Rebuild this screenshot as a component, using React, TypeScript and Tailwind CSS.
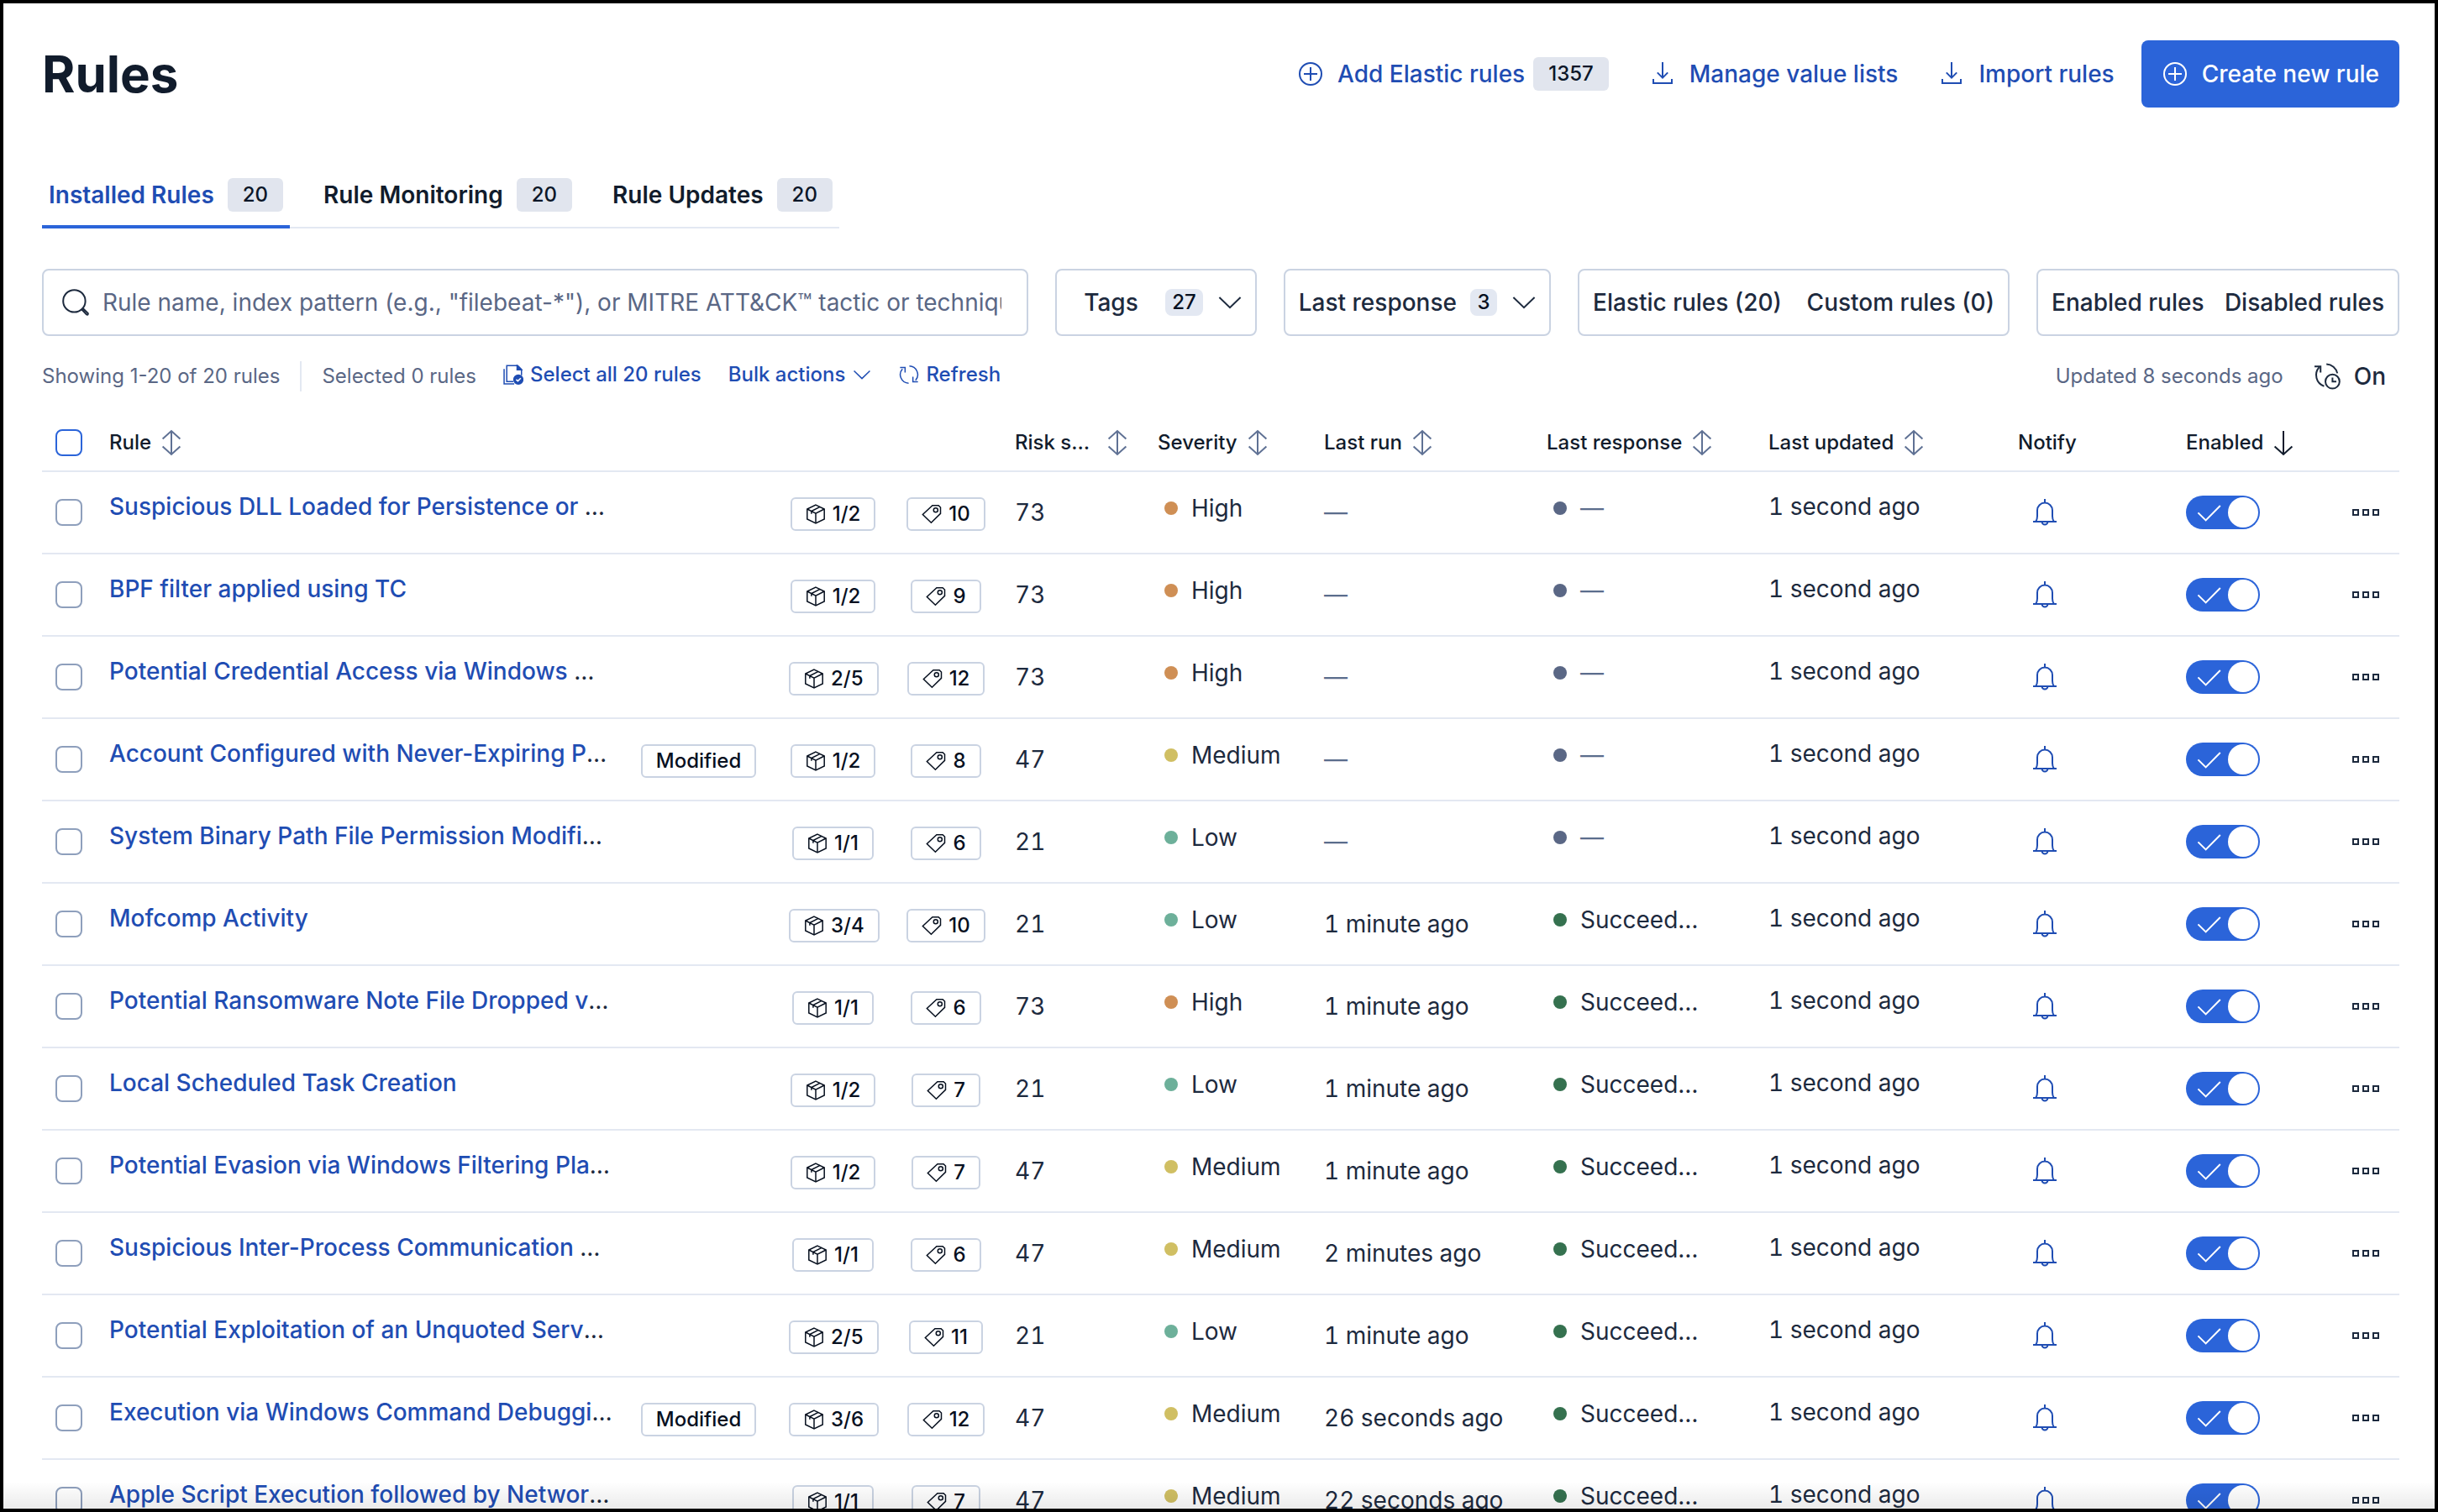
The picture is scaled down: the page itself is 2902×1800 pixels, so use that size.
import { ReactNode, useState } from 'react';

type Severity = 'High' | 'Medium' | 'Low';

interface Rule {
  name: string;
  truncated?: boolean;
  modified?: boolean;
  integrations: string;
  tags: number;
  risk: number;
  severity: Severity;
  lastRun?: string;
}

const RULES: Rule[] = [
  { name: 'Suspicious DLL Loaded for Persistence or ', truncated: true, integrations: '1/2', tags: 10, risk: 73, severity: 'High' },
  { name: 'BPF filter applied using TC', integrations: '1/2', tags: 9, risk: 73, severity: 'High' },
  { name: 'Potential Credential Access via Windows ', truncated: true, integrations: '2/5', tags: 12, risk: 73, severity: 'High' },
  { name: 'Account Configured with Never-Expiring P', truncated: true, modified: true, integrations: '1/2', tags: 8, risk: 47, severity: 'Medium' },
  { name: 'System Binary Path File Permission Modifi', truncated: true, integrations: '1/1', tags: 6, risk: 21, severity: 'Low' },
  { name: 'Mofcomp Activity', integrations: '3/4', tags: 10, risk: 21, severity: 'Low', lastRun: '1 minute ago' },
  { name: 'Potential Ransomware Note File Dropped v', truncated: true, integrations: '1/1', tags: 6, risk: 73, severity: 'High', lastRun: '1 minute ago' },
  { name: 'Local Scheduled Task Creation', integrations: '1/2', tags: 7, risk: 21, severity: 'Low', lastRun: '1 minute ago' },
  { name: 'Potential Evasion via Windows Filtering Pla', truncated: true, integrations: '1/2', tags: 7, risk: 47, severity: 'Medium', lastRun: '1 minute ago' },
  { name: 'Suspicious Inter-Process Communication ', truncated: true, integrations: '1/1', tags: 6, risk: 47, severity: 'Medium', lastRun: '2 minutes ago' },
  { name: 'Potential Exploitation of an Unquoted Serv', truncated: true, integrations: '2/5', tags: 11, risk: 21, severity: 'Low', lastRun: '1 minute ago' },
  { name: 'Execution via Windows Command Debuggi', truncated: true, modified: true, integrations: '3/6', tags: 12, risk: 47, severity: 'Medium', lastRun: '26 seconds ago' },
  { name: 'Apple Script Execution followed by Networ', truncated: true, integrations: '1/1', tags: 7, risk: 47, severity: 'Medium', lastRun: '22 seconds ago' },
];

const SEVERITY_DOT: Record<Severity, string> = {
  High: 'bg-[#cf8f55]',
  Medium: 'bg-[#d0bf63]',
  Low: 'bg-[#6db09a]',
};

const TABS = [
  { id: 'installed', label: 'Installed Rules', count: 20 },
  { id: 'monitoring', label: 'Rule Monitoring', count: 20 },
  { id: 'updates', label: 'Rule Updates', count: 20 },
];

function Icon({ size = 'size-8', children }: { size?: string; children: ReactNode }) {
  return (
    <svg
      viewBox="0 0 16 16"
      className={`${size} shrink-0`}
      fill="none"
      stroke="currentColor"
      strokeWidth="1"
      aria-hidden="true"
    >
      {children}
    </svg>
  );
}

const PlusInCircle = () => (
  <Icon>
    <circle cx="8" cy="8" r="6.5" />
    <path d="M8 4v8M4 8h8" />
  </Icon>
);

const ImportIcon = () => (
  <Icon>
    <path d="M8 1v9.2M4.9 7.2 8 10.3l3.1-3.1M2.5 11v2.5h11V11" />
  </Icon>
);

const SearchIcon = () => (
  <Icon>
    <circle cx="7.2" cy="7.2" r="6.6" />
    <path d="m11.7 12.3 2.8 2.9q.6.3.8-.1t0-.7l-2.9-2.8" />
  </Icon>
);

const ChevronDown = ({ size }: { size?: string }) => (
  <Icon size={size}>
    <path d="m1.7 5 6.3 6.1L14.3 5" />
  </Icon>
);

const SortIcon = () => (
  <Icon>
    <path d="M8 1v14M2.8 5.8 8 1l5.2 4.8M2.8 10.2 8 15l5.2-4.8" />
  </Icon>
);

const SortDown = () => (
  <Icon>
    <path d="M8 1v14M2.8 10.2 8 15l5.2-4.8" />
  </Icon>
);

const PagesSelect = () => (
  <Icon size="size-6">
    <path d="M.7 3.5v11.8h8" />
    <path d="M8 13.5H2.8V.8h8.7l3 3v4.7" />
    <path d="M11 .8v3.4h3.5z" fill="currentColor" />
    <circle cx="12" cy="11.9" r="3.6" fill="currentColor" />
    <path d="m10.3 11.9 1.3 1.2 2.3-2.3" stroke="#fff" />
  </Icon>
);

const RefreshIcon = () => (
  <Icon size="size-6">
    <path d="M8.3 1.2a6.8 6.8 0 0 1 4.9 11.3M7.7 14.8A6.8 6.8 0 0 1 2.8 3.5" />
    <path d="M.9 2.4h4v4M15.1 13.6h-4v-4" />
  </Icon>
);

const RefreshTime = () => (
  <Icon>
    <path d="M7.6.7a7 7 0 0 1 6.5 5.5M6.2 13.9A7 7 0 0 1 3.3 2.6" />
    <path d="M.5 2.1h3.6v3.6" />
    <circle cx="11.2" cy="11.1" r="4.2" />
    <path d="M11.2 8.8v2.3h2.3" />
  </Icon>
);

const PackageIcon = () => (
  <Icon size="size-6">
    <path d="M8 .7 14.8 4v8L8 15.3 1.2 12V4z" />
    <path d="M1.2 4 8 7.4 14.8 4M8 7.4v7.9M4.6 7.8V5.7l6.8-3.4" />
  </Icon>
);

const TagIcon = () => (
  <Icon size="size-6">
    <path d="M8.6 1.2h4.8l1.6 1.5v4.9l-7.4 7.2L.9 8.3z" />
    <circle cx="11.2" cy="4.8" r="1.7" />
  </Icon>
);

const BellIcon = () => (
  <Icon>
    <path d="M8 0v2.2M1 13.5h14M2.6 13.4c.6-.8.9-1.9.9-3.2V6.800a4.5 4.5 0 0 1 9 0v3.4c0 1.300.3 2.400.9 3.200M6.300 13.600a1.700 1.700 0 0 0 3.400 0" />
  </Icon>
);

const BoxesHorizontal = () => (
  <Icon>
    <path d="M.5 6.5h3v3h-3zM6.5 6.5h3v3h-3zM12.5 6.5h3v3h-3z" />
  </Icon>
);

function CountBadge({ children }: { children: ReactNode }) {
  return (
    <span className="flex h-10 items-center rounded-md bg-[#e1e5ee] px-[18px] text-[24px] font-medium text-[#0b1628]">
      {children}
    </span>
  );
}

function OutlineBadge({ children }: { children: ReactNode }) {
  return (
    <button
      type="button"
      className="mx-auto flex h-10 items-center gap-2 rounded-md border-2 border-[#cad3e2] px-4 text-[24px] font-medium text-[#07101f]"
    >
      {children}
    </button>
  );
}

function HeaderLink({ icon, label, badge }: { icon: ReactNode; label: string; badge?: number }) {
  return (
    <a href="#" className="flex h-20 items-center px-4 font-medium text-[#1f4db3]">
      {icon}
      <span className="ml-4">{label}</span>
      {badge !== undefined && (
        <span className="ml-[10px]">
          <CountBadge>{badge}</CountBadge>
        </span>
      )}
    </a>
  );
}

function FilterButton({ label, count, className }: { label: string; count: number; className: string }) {
  return (
    <button
      type="button"
      className={`flex h-20 items-center justify-end gap-4 rounded-lg border-2 border-[#cad3e2] pr-[14px] pl-4 font-medium ${className}`}
    >
      <span className="flex-1">{label}</span>
      <span className="flex h-8 min-w-8 items-center justify-center rounded-lg bg-[#e3e8f2] px-2 text-[24px] text-[#07101f]">
        {count}
      </span>
      <ChevronDown />
    </button>
  );
}

function FilterGroup({ items, className }: { items: string[]; className: string }) {
  return (
    <div
      className={`flex h-20 items-center justify-between gap-6 rounded-lg border-2 border-[#cad3e2] px-4 ${className}`}
    >
      {items.map((item) => (
        <button key={item} type="button" className="font-medium">
          {item}
        </button>
      ))}
    </div>
  );
}

interface ThProps {
  label?: string;
  sortable?: boolean;
  sorted?: boolean;
  spread?: boolean;
}

function Th({ label, sortable, sorted, spread }: ThProps) {
  return (
    <th className="border-b-2 border-[#e3e8f2] px-4 text-left font-medium">
      <div className={spread ? 'flex items-center justify-between' : 'flex items-center gap-2'}>
        {label}
        {sortable && (
          <span className="text-[#5f7194]">
            <SortIcon />
          </span>
        )}
        {sorted && <SortDown />}
      </div>
    </th>
  );
}

function Td({ children, className = '' }: { children?: ReactNode; className?: string }) {
  return <td className={`border-b-2 border-[#e3e8f2] px-4 whitespace-nowrap ${className}`}>{children}</td>;
}

function Health({ dot, children }: { dot: string; children: ReactNode }) {
  return (
    <div className="flex items-center gap-2">
      <span className="flex size-8 items-center justify-center">
        <span className={`size-4 rounded-full ${dot}`} />
      </span>
      {children}
    </div>
  );
}

const Dash = () => <span className="text-[#5a6d8c]">—</span>;

function RuleRow({ rule }: { rule: Rule }) {
  const [enabled, setEnabled] = useState(true);

  return (
    <tr className="h-[98px]">
      <Td>
        <input
          type="checkbox"
          aria-label={`Select ${rule.name}`}
          className="block size-8 appearance-none rounded-lg border-2 border-[#8e9fbc] bg-white"
        />
      </Td>
      <Td className="pb-[14px]">
        <a href="#" className="font-medium text-[#1f4db3]">
          {rule.name}
        </a>
        {rule.truncated && '…'}
      </Td>
      <Td className="pt-1">{rule.modified && <OutlineBadge>Modified</OutlineBadge>}</Td>
      <Td className="pt-1">
        <OutlineBadge>
          <PackageIcon />
          {rule.integrations}
        </OutlineBadge>
      </Td>
      <Td className="pt-1">
        <OutlineBadge>
          <TagIcon />
          {rule.tags}
        </OutlineBadge>
      </Td>
      <Td className="tabular-nums">{rule.risk}</Td>
      <Td className="pb-[10px]">
        <Health dot={SEVERITY_DOT[rule.severity]}>{rule.severity}</Health>
      </Td>
      <Td className="tabular-nums">{rule.lastRun ?? <Dash />}</Td>
      <Td className="pb-[10px]">
        <Health dot={rule.lastRun ? 'bg-[#35714f]' : 'bg-[#5a6785]'}>{rule.lastRun ? 'Succeed…' : <Dash />}</Health>
      </Td>
      <Td className="pb-[14px] tabular-nums">1 second ago</Td>
      <Td>
        <button type="button" aria-label="Notify" className="ml-4 flex text-[#1f4db3]">
          <BellIcon />
        </button>
      </Td>
      <Td>
        <label className="relative block h-10 w-[88px]">
          <input
            type="checkbox"
            role="switch"
            aria-label="Enable rule"
            checked={enabled}
            onChange={() => setEnabled(!enabled)}
            className="peer block h-full w-full appearance-none rounded-full bg-gray-400 checked:bg-[#2b64d9]"
          />
          <span className="pointer-events-none absolute inset-y-0 left-3 flex items-center text-white">
            <Icon>
              <path d="m1.200 8.200 4.600 4.500 8.600-8.700" />
            </Icon>
          </span>
          <span className="pointer-events-none absolute top-[2px] left-[2px] size-9 rounded-full bg-white peer-checked:left-[50px]" />
        </label>
      </Td>
      <Td>
        <button type="button" aria-label="All actions" className="mx-auto flex">
          <BoxesHorizontal />
        </button>
      </Td>
    </tr>
  );
}

export default function App() {
  const [activeTab, setActiveTab] = useState('installed');

  return (
    <div className="relative h-screen overflow-hidden border-4 border-black bg-white pt-11 pr-[42px] pl-[46px] font-[Inter,sans-serif] text-[28px] leading-10 text-[#1d2a3e]">
      <header className="flex h-20 items-center justify-between">
        <h1 className="text-[60px] leading-[80px] font-bold text-[#111c2c]">Rules</h1>
        <div className="flex items-center gap-4">
          <HeaderLink icon={<PlusInCircle />} label="Add Elastic rules" badge={1357} />
          <HeaderLink icon={<ImportIcon />} label="Manage value lists" />
          <HeaderLink icon={<ImportIcon />} label="Import rules" />
          <button
            type="button"
            className="flex h-20 items-center gap-4 rounded-lg bg-[#2b64d9] px-6 font-medium text-white"
          >
            <PlusInCircle />
            Create new rule
          </button>
        </div>
      </header>

      <div className="mt-16 flex">
        <div role="tablist" className="flex gap-8 shadow-[inset_0_-2px_0_#e3e8f2]">
          {TABS.map((tab) => (
            <button
              key={tab.id}
              type="button"
              role="tab"
              aria-selected={tab.id === activeTab}
              onClick={() => setActiveTab(tab.id)}
              className={
                tab.id === activeTab
                  ? 'flex h-20 items-center gap-4 px-2 font-semibold text-[#1f4db3] shadow-[inset_0_-4px_0_#2b64d9]'
                  : 'flex h-20 items-center gap-4 px-2 font-semibold text-[#111c2c]'
              }
            >
              {tab.label}
              <CountBadge>{tab.count}</CountBadge>
            </button>
          ))}
        </div>
      </div>

      <div className="mt-12 flex gap-8">
        <label className="flex h-20 min-w-0 flex-1 items-center gap-4 rounded-lg border-2 border-[#cad3e2] pr-[30px] pl-[22px]">
          <SearchIcon />
          <input
            type="text"
            aria-label="Search rules"
            placeholder={'Rule name, index pattern (e.g., "filebeat-*"), or MITRE ATT&CK™ tactic or technique (e.g., "Defense Evasion")'}
            className="min-w-0 flex-1 bg-transparent outline-none placeholder:text-[#5a6785]"
          />
        </label>
        <FilterButton label="Tags" count={27} className="min-w-[240px]" />
        <FilterButton label="Last response" count={3} className="min-w-[318px]" />
        <FilterGroup items={['Elastic rules (20)', 'Custom rules (0)']} className="min-w-[514px]" />
        <FilterGroup items={['Enabled rules', 'Disabled rules']} className="min-w-[432px]" />
      </div>

      <div className="mt-[30px] flex h-9 items-center text-[24px] text-[#5a6785]">
        <span>Showing 1-20 of 20 rules</span>
        <span className="mx-6 h-9 w-[2px] bg-[#e3e8f2]" />
        <span>Selected 0 rules</span>
        <div className="ml-8 flex gap-8 pb-1 font-medium text-[#1f4db3]">
          <button type="button" className="flex items-center gap-2">
            <PagesSelect />
            Select all 20 rules
          </button>
          <button type="button" className="flex items-center gap-2">
            Bulk actions
            <ChevronDown size="size-6" />
          </button>
          <button type="button" className="flex items-center gap-2">
            <RefreshIcon />
            Refresh
          </button>
        </div>
        <span className="ml-auto">Updated 8 seconds ago</span>
        <button type="button" className="ml-9 flex items-center gap-4 pr-4 text-[28px] font-medium text-[#1d2a3e]">
          <RefreshTime />
          On
        </button>
      </div>

      <table className="mt-7 w-full table-fixed border-separate border-spacing-0">
        <colgroup>
          <col className="w-[64px]" />
          <col />
          <col className="w-[183px]" />
          <col className="w-[137px]" />
          <col className="w-[132px]" />
          <col className="w-[170px]" />
          <col className="w-[198px]" />
          <col className="w-[265px]" />
          <col className="w-[264px]" />
          <col className="w-[297px]" />
          <col className="w-[200px]" />
          <col className="w-[190px]" />
          <col className="w-[80px]" />
        </colgroup>
        <thead className="text-[24px] text-[#111c2c]">
          <tr className="h-[68px]">
            <th className="border-b-2 border-[#e3e8f2] px-4">
              <input
                type="checkbox"
                aria-label="Select all rules"
                className="block size-8 appearance-none rounded-lg border-2 border-[#2b64d9] bg-white"
              />
            </th>
            <Th label="Rule" sortable />
            <Th />
            <Th />
            <Th />
            <Th label="Risk s…" sortable spread />
            <Th label="Severity" sortable />
            <Th label="Last run" sortable />
            <Th label="Last response" sortable />
            <Th label="Last updated" sortable />
            <Th label="Notify" />
            <Th label="Enabled" sorted />
            <Th />
          </tr>
        </thead>
        <tbody>
          {RULES.map((rule) => (
            <RuleRow key={rule.name} rule={rule} />
          ))}
        </tbody>
      </table>

      <div className="pointer-events-none absolute inset-x-0 bottom-0 h-8 bg-linear-to-b from-transparent to-black/8" />
    </div>
  );
}
